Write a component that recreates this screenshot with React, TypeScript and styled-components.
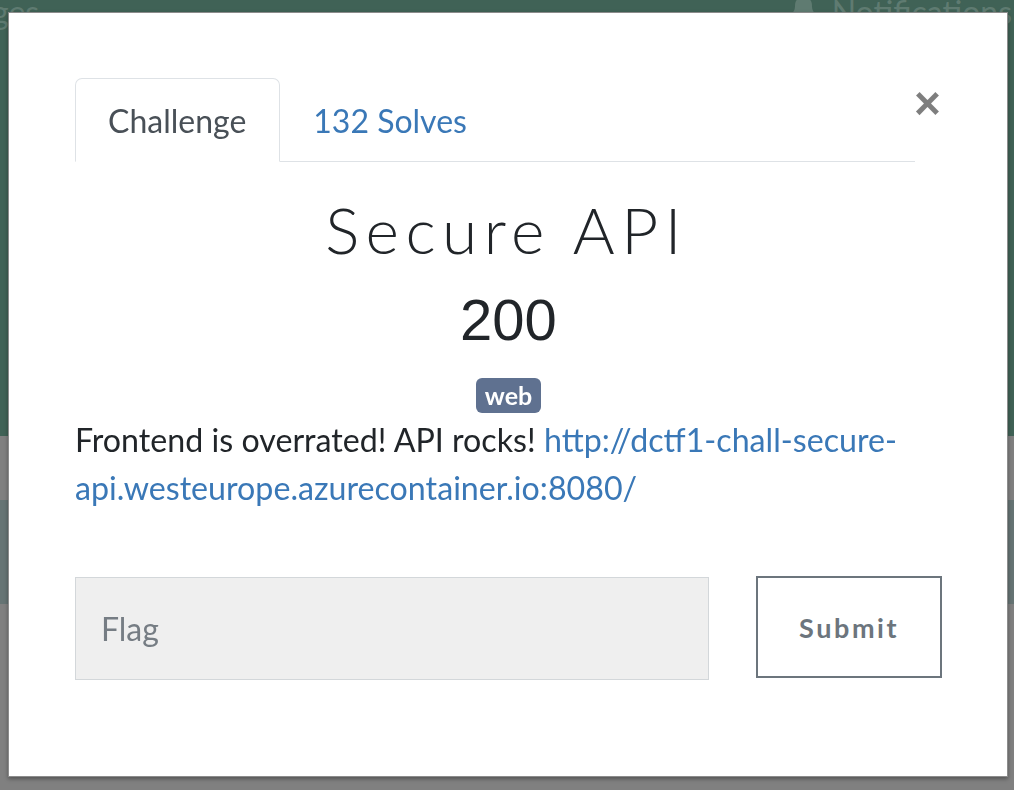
import React from "react";
import styled, { createGlobalStyle } from "styled-components";
import { FaBell } from "react-icons/fa";

const GlobalStyle = createGlobalStyle`
  html, body { margin: 0; padding: 0; }
  body {
    font-family: Lato, "Open Sans", "Liberation Sans", sans-serif;
    background: #808080;
    overflow: hidden;
  }
  * { box-sizing: border-box; }
`;

const Page = styled.div`
  display: flex;
  flex-direction: column;
  min-height: 790px;
`;

const TopBand = styled.header`
  height: 436px;
  background: #406256;
  overflow: hidden;
`;

const NavBar = styled.nav`
  display: flex;
  align-items: flex-start;
  justify-content: space-between;
  margin-top: -4px;
  padding-right: 2px;
  font-size: 32px;
  line-height: 1;
  color: #5f7b71;
`;

const NavLink = styled.span<{ $offset?: number }>`
  display: inline-flex;
  align-items: flex-start;
  gap: 15px;
  margin-left: ${(p) => p.$offset ?? 0}px;
  white-space: nowrap;
`;

const Band = styled.div<{ $h: number; $bg: string }>`
  height: ${(p) => p.$h}px;
  background: ${(p) => p.$bg};
`;

const Overlay = styled.div`
  position: fixed;
  inset: 0;
  display: flex;
  align-items: flex-start;
  justify-content: flex-start;
  padding: 12px 0 0 8px;
`;

const Modal = styled.div`
  width: 1000px;
  height: 765px;
  background: #fff;
  border: 1px solid rgba(0, 0, 0, 0.45);
  box-shadow: 0 2px 4px rgba(0, 0, 0, 0.35);
  padding: 65px 65px 0 66px;
  display: flex;
  flex-direction: column;
  color: #212529;
  font-size: 32px;
  line-height: 1.5;
`;

const Header = styled.div`
  display: flex;
  align-items: flex-start;
`;

const Tabs = styled.ul`
  flex: 0 0 840px;
  display: flex;
  list-style: none;
  margin: 0;
  padding: 0;
  border-bottom: 1px solid #dee2e6;
`;

const Tab = styled.li<{ $active?: boolean }>`
  margin-bottom: -1px;
  padding: 16px 33px 15px 32px;
  border: 1px solid ${(p) => (p.$active ? "#dee2e6" : "transparent")};
  border-bottom-color: ${(p) => (p.$active ? "#fff" : "transparent")};
  border-radius: 7px 7px 0 0;
  background: ${(p) => (p.$active ? "#fff" : "transparent")};
  color: ${(p) => (p.$active ? "#495057" : "#3a78b7")};
  font-size: 32px;
  line-height: 51px;
  cursor: pointer;
`;

const Close = styled.button`
  margin: 2px 0 0 -1px;
  width: 26px;
  padding: 0;
  border: 0;
  background: transparent;
  font-family: "Liberation Sans", Arial, sans-serif;
  font-size: 46px;
  font-weight: 700;
  line-height: 1;
  color: #000;
  opacity: 0.5;
  cursor: pointer;
`;

const Title = styled.h2`
  margin: 30px 0 0;
  padding-right: 4px;
  text-align: center;
  font-size: 64px;
  font-weight: 300;
  line-height: 1.2;
  letter-spacing: 6.5px;
  color: #212529;
`;

const Points = styled.h3`
  margin: 16px 0 0;
  text-align: center;
  font-family: "Liberation Sans", Arial, sans-serif;
  font-size: 58px;
  font-weight: 400;
  line-height: 1.2;
  color: #212529;
`;

const Tags = styled.div`
  display: flex;
  justify-content: center;
  margin-top: 24px;
`;

const Badge = styled.span`
  display: inline-flex;
  align-items: center;
  justify-content: center;
  height: 35px;
  padding: 0 9px;
  border-radius: 6px;
  background: #5f7190;
  color: #fff;
  font-size: 25px;
  font-weight: 700;
  line-height: 1;
`;

const Description = styled.p`
  margin: 3px 0 0;
  font-size: 32.2px;
  line-height: 48px;
  color: #212529;
`;

const Link = styled.a`
  color: #3a78b7;
  text-decoration: none;
`;

const FlagForm = styled.form`
  display: flex;
  align-items: flex-start;
  gap: 47px;
  margin-top: 65px;
`;

const FlagInput = styled.input`
  width: 635px;
  height: 103px;
  padding: 0 25px;
  border: 1px solid #d3d7da;
  background: #efefef;
  font-family: Lato, "Open Sans", sans-serif;
  font-size: 32px;
  color: #495057;
  outline: none;
  &::placeholder {
    color: #767d84;
  }
`;

const SubmitButton = styled.button`
  width: 186px;
  height: 102px;
  margin-top: -1px;
  border: 2px solid #6c757d;
  background: #fff;
  color: #6c757d;
  font-family: Lato, "Open Sans", sans-serif;
  font-size: 27px;
  font-weight: 700;
  letter-spacing: 2.6px;
  cursor: pointer;
`;

export default function App() {
  return (
    <>
      <GlobalStyle />
      <Page>
        <TopBand>
          <NavBar>
            <NavLink $offset={-113}>Challenges</NavLink>
            <NavLink>
              <FaBell size={27} style={{ marginTop: -2 }} />
              Notifications
            </NavLink>
          </NavBar>
        </TopBand>
        <Band $h={64} $bg="#808080" />
        <Band $h={104} $bg="#667474" />
        <Band $h={186} $bg="#808080" />
      </Page>
      <Overlay>
        <Modal role="dialog">
          <Header>
            <Tabs>
              <Tab $active>Challenge</Tab>
              <Tab>132 Solves</Tab>
            </Tabs>
            <Close aria-label="Close">×</Close>
          </Header>
          <Title>Secure API</Title>
          <Points>200</Points>
          <Tags>
            <Badge>web</Badge>
          </Tags>
          <Description>
            Frontend is overrated! API rocks!{" "}
            <Link href="#">http://dctf1-chall-secure-api.westeurope.azurecontainer.io:8080/</Link>
          </Description>
          <FlagForm onSubmit={(e) => e.preventDefault()}>
            <FlagInput placeholder="Flag" />
            <SubmitButton type="submit">Submit</SubmitButton>
          </FlagForm>
        </Modal>
      </Overlay>
    </>
  );
}
